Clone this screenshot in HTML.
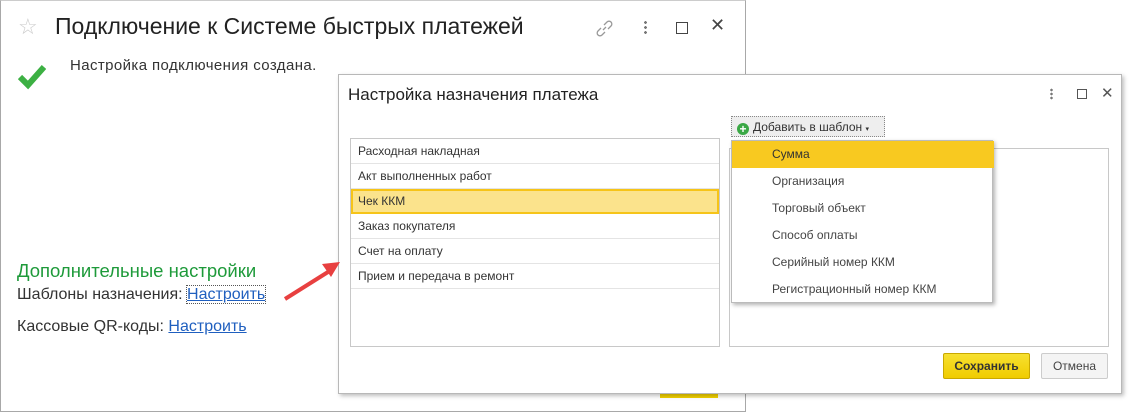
<!DOCTYPE html>
<html><head><meta charset="utf-8"><style>
body{margin:0;width:1129px;height:414px;background:#fff;position:relative;overflow:hidden;font-family:"Liberation Sans",sans-serif;color:#333}
.a{position:absolute}
.row{position:absolute;left:0;width:368px;height:25px;border-bottom:1px solid #e4e4e4;font-size:12px;line-height:25px;padding-left:7px;box-sizing:border-box}
.it{position:absolute;left:0;width:262px;height:27px;font-size:12px;line-height:27px;padding-left:40px;box-sizing:border-box;color:#444}
</style></head><body>
<div class="a" style="left:0;top:0;width:744px;height:410px;border:1px solid #a8a8a8;border-top:1px solid #ccc"></div>
<div class="a" style="left:18px;top:14px;font-size:22px;color:#ccc">☆</div>
<div class="a" style="left:55px;top:13px;font-size:23px;color:#222">Подключение к Системе быстрых платежей</div>
<svg class="a" style="left:594px;top:18px" width="20" height="20"><path d="M9 12 L12 9 M7 10 L4 13 a2.5 2.5 0 0 0 4 4 L11 14 M10 7 L13 4 a2.5 2.5 0 0 1 4 4 L14 11" stroke="#999" fill="none" stroke-width="1.3"/></svg>
<div class="a" style="left:644px;top:20px;width:3px;height:14px;background:radial-gradient(circle,#777 1.3px,transparent 1.5px) 0 0/3px 5px"></div>
<div class="a" style="left:676px;top:22px;width:10px;height:10px;border:1px solid #444"></div>
<div class="a" style="left:710px;top:15px;font-size:18px;color:#444">✕</div>
<svg class="a" style="left:18px;top:62px" width="28" height="28"><path d="M2 15 L10 23 L26 5" stroke="#3cb043" stroke-width="6" fill="none"/></svg>
<div class="a" style="left:70px;top:57px;font-size:15px;color:#333;letter-spacing:0.4px">Настройка подключения создана.</div>
<div class="a" style="left:17px;top:260px;font-size:18.5px;color:#1e9a3a">Дополнительные настройки</div>
<div class="a" style="left:17px;top:286px;font-size:16px">Шаблоны назначения: <span style="color:#1f5fbf;text-decoration:underline;outline:1px dotted #555">Настроить</span></div>
<div class="a" style="left:17px;top:318px;font-size:16px">Кассовые QR-коды: <span style="color:#1f5fbf;text-decoration:underline">Настроить</span></div>
<div class="a" style="left:660px;top:390px;width:58px;height:8px;background:#f3d200"></div>
<div class="a" style="left:338px;top:74px;width:782px;height:318px;background:#fff;border:1px solid #b8b8b8;box-shadow:2px 2px 4px rgba(0,0,0,.25)"></div>
<svg class="a" style="left:280px;top:252px" width="70" height="52"><path d="M5 47 L48 20" stroke="#e84040" stroke-width="4"/><path d="M60 10 L42 12 L51 25 Z" fill="#e84040"/></svg>
<div class="a" style="left:348px;top:85px;font-size:17px;color:#222">Настройка назначения платежа</div>
<div class="a" style="left:1050px;top:88px;width:3px;height:12px;background:radial-gradient(circle,#777 1.2px,transparent 1.4px) 0 0/3px 4px"></div>
<div class="a" style="left:1077px;top:89px;width:8px;height:8px;border:1px solid #555"></div>
<div class="a" style="left:1101px;top:84px;font-size:15px;color:#555">✕</div>
<div class="a" style="left:350px;top:138px;width:368px;height:207px;border:1px solid #c8c8c8">
<div class="row" style="top:0">Расходная накладная</div>
<div class="row" style="top:25px">Акт выполненных работ</div>
<div class="row" style="top:50px;background:#fbe38c;border:2px solid #f6c418;line-height:21px;padding-left:5px">Чек ККМ</div>
<div class="row" style="top:75px">Заказ покупателя</div>
<div class="row" style="top:100px">Счет на оплату</div>
<div class="row" style="top:125px">Прием и передача в ремонт</div>
</div>
<div class="a" style="left:729px;top:148px;width:378px;height:197px;border:1px solid #c8c8c8"></div>
<div class="a" style="left:731px;top:116px;width:154px;height:21px;background:#eee;border:1px dotted #888;font-size:12px;line-height:21px;box-sizing:border-box">
<span style="display:inline-block;width:12px;height:12px;border-radius:50%;background:#3aa845;color:#fff;font-size:12px;line-height:12px;text-align:center;margin:0 4px 0 5px;vertical-align:-2px;font-weight:bold">+</span>Добавить в шаблон <span style="font-size:7px">▾</span></div>
<div class="a" style="left:731px;top:140px;width:262px;height:163px;background:#fff;border:1px solid #bbb;box-shadow:2px 2px 4px rgba(0,0,0,.3);box-sizing:border-box">
<div class="it" style="top:0;background:#f8c920;color:#333">Сумма</div>
<div class="it" style="top:27px">Организация</div>
<div class="it" style="top:54px">Торговый объект</div>
<div class="it" style="top:81px">Способ оплаты</div>
<div class="it" style="top:108px">Серийный номер ККМ</div>
<div class="it" style="top:135px">Регистрационный номер ККМ</div>
</div>
<div class="a" style="left:943px;top:353px;width:87px;height:26px;background:linear-gradient(#f7e030,#f0cc00);border:1px solid #c9a800;border-radius:2px;box-sizing:border-box;font-size:12px;font-weight:bold;line-height:24px;text-align:center;color:#333">Сохранить</div>
<div class="a" style="left:1041px;top:353px;width:67px;height:26px;background:#f4f4f4;border:1px solid #ccc;border-radius:2px;box-sizing:border-box;font-size:12px;line-height:24px;text-align:center;color:#444">Отмена</div>
</body></html>
